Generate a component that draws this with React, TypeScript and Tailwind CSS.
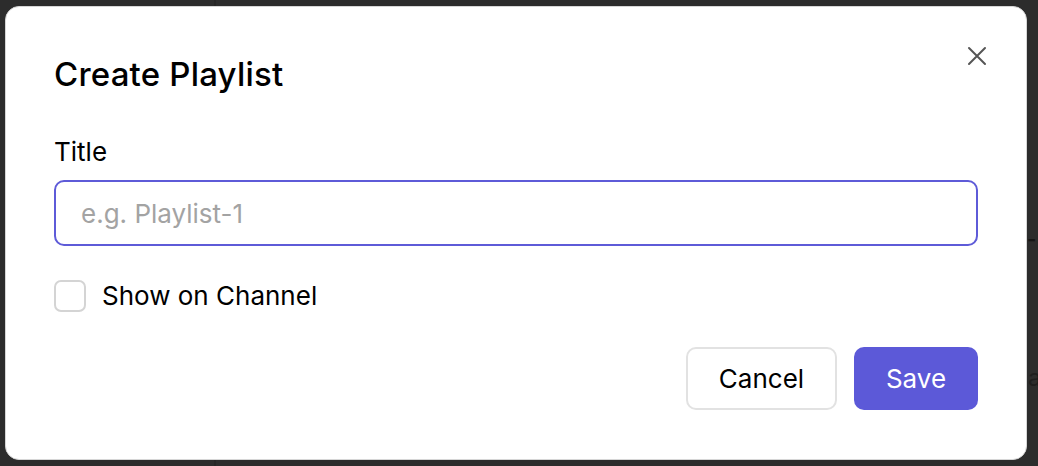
import React, { useState } from 'react';

const font = { fontFamily: 'Inter, "Liberation Sans", sans-serif' };

function CloseIcon() {
  return (
    <svg width="20" height="20" viewBox="0 0 20 20" fill="none" stroke="#555" strokeWidth="2" strokeLinecap="round">
      <path d="M2 2 L18 18 M18 2 L2 18" />
    </svg>
  );
}

export default function App() {
  const [checked, setChecked] = useState(false);

  return (
    <div className="relative w-[1038px] h-[466px] overflow-hidden bg-[#2c2c2c]" style={font}>
      {/* background bits behind the overlay */}
      <div className="absolute left-[214px] top-0 h-full w-[2px] bg-[#262626]" />
      <span className="absolute left-[1028px] top-[360px] text-[24px] text-[#1e1e1e]">a</span>
      <span className="absolute left-[1027px] top-[224px] text-[20px] font-bold text-[#151515]">-</span>

      <div className="relative ml-[5px] mt-[6px] w-[1022px] h-[454px] rounded-[14px] border border-[#d6d6d6] bg-white px-[48px] pt-[48px] pb-[48px] flex flex-col">
        <button className="absolute right-[39px] top-[39px]">
          <CloseIcon />
        </button>

        <h2 className="text-[33px] leading-[38px] font-medium tracking-[0.2px] text-black">Create Playlist</h2>

        <label className="mt-[44px] text-[26px] leading-[30px] text-black">Title</label>
        <input
          placeholder="e.g. Playlist-1"
          className="mt-[13px] h-[66px] w-full rounded-[10px] border-2 border-[#5e5bd8] px-[25px] text-[26px] text-black placeholder:text-[#a3a3a3] outline-none"
        />

        <div className="mt-[34px] flex items-center gap-[16px]">
          <button
            onClick={() => setChecked(!checked)}
            className="h-[32px] w-[32px] rounded-[7px] border-2 border-[#d4d4d4] bg-white"
          />
          <span className="text-[26px] leading-[30px] text-black">Show on Channel</span>
        </div>

        <div className="mt-[35px] flex justify-end gap-[17px]">
          <button className="h-[63px] w-[151px] rounded-[10px] border-2 border-[#e2e2e2] bg-white text-[26px] text-black">
            Cancel
          </button>
          <button className="h-[63px] w-[124px] rounded-[10px] bg-[#5c59d8] text-[26px] text-white">
            Save
          </button>
        </div>
      </div>
    </div>
  );
}
